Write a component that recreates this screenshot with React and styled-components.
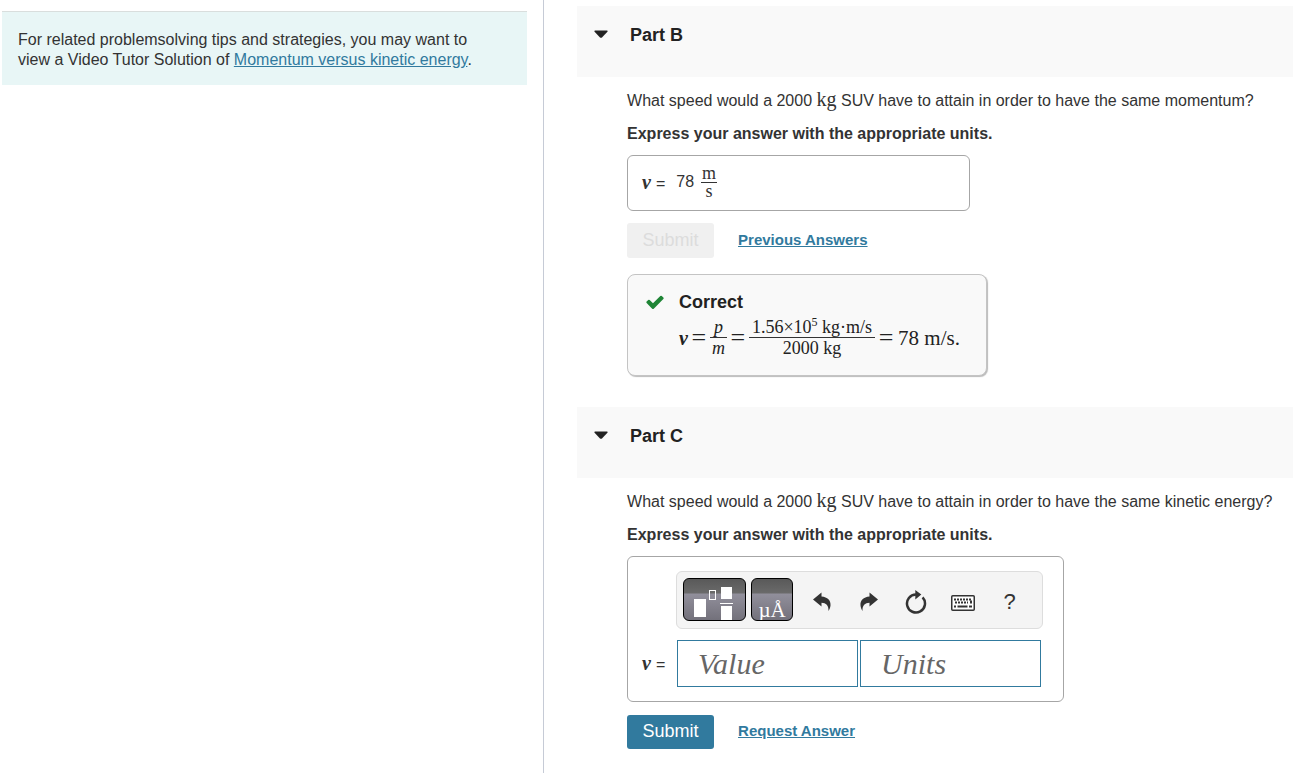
import React from "react";
import styled, { createGlobalStyle } from "styled-components";

const serif = `"Liberation Serif", "Times New Roman", serif`;

const GlobalStyle = createGlobalStyle`
  * { box-sizing: border-box; }
  body {
    margin: 0;
    background: #fff;
    color: #333;
    font: 16px/20px "Liberation Sans", Arial, sans-serif;
  }
  p, h2, h3 { margin: 0; }
  button, input { font-family: inherit; }
`;

const Page = styled.div`
  display: grid;
  grid-template-columns: 42fr 58fr;
  min-height: 100vh;
  overflow: hidden;
`;

const Sidebar = styled.aside`
  padding: 11px 16px 0 2px;
`;

const Tip = styled.p`
  padding: 18px 40px 15px 16px;
  border-top: 1px solid #d9dedd;
  background: #e8f6f6;
`;

const Link = styled.a`
  color: #317a9e;
  text-decoration: underline;
`;

const ActionLink = styled(Link)`
  padding-bottom: 2px;
  font-size: 15px;
  font-weight: bold;
`;

const Main = styled.main`
  border-left: 1px solid #c6cbd6;
  padding: 6px 0 0 33px;
  min-width: 0;
`;

const PartHeader = styled.header`
  display: flex;
  align-items: flex-start;
  gap: 22px;
  height: 71px;
  padding: 19px 0 0 17px;
  background: #f9f9f9;
`;

const Toggle = styled.button`
  display: flex;
  align-items: center;
  width: 14px;
  height: 18px;
  padding: 0;
  border: 0;
  background: none;
  cursor: pointer;
`;

const Title = styled.h2`
  color: #222;
  font-size: 18px;
  line-height: 20px;
`;

const PartBody = styled.div`
  display: flex;
  flex-direction: column;
  align-items: flex-start;
  padding: 14px 0 31px 50px;
`;

const Question = styled.p`
  white-space: nowrap;
`;

const Instruction = styled.p`
  margin: 13px 0 11px;
  font-weight: bold;
`;

const AnswerBox = styled.div`
  border: 1px solid #a6a6a6;
  border-radius: 6px;
  padding: 0 14px;
`;

const GivenAnswer = styled(AnswerBox)`
  display: flex;
  align-items: center;
  width: 343px;
  height: 56px;
  padding-bottom: 2px;
`;

const EntryBox = styled(AnswerBox)`
  display: grid;
  grid-template-columns: 34px auto;
  row-gap: 11px;
  align-items: center;
  width: 437px;
  padding: 14px 20px 14px 14px;
`;

const VarLabel = styled.label`
  display: flex;
  align-items: baseline;
  gap: 5px;
  padding-top: 2px;
  font-size: 16px;
`;

const Unit = styled.span`
  font-family: ${serif};
  font-size: 20px;
  line-height: 16px;
`;

const Var = styled.i`
  font-family: ${serif};
  font-size: 20px;
  line-height: 18px;
  font-weight: bold;
`;

const GivenValue = styled.span`
  margin: 0 7px 0 11px;
`;

const Fraction = styled.span`
  display: inline-flex;
  flex-direction: column;
  align-items: stretch;
  text-align: center;
  font-family: ${serif};
  font-size: 18px;
  line-height: ${(p) => p.$line || 20}px;
  white-space: nowrap;

  > :first-child {
    border-bottom: 1px solid #333;
    padding: 0 ${(p) => p.$pad || 0}px;
  }
`;

const Power = styled.sup`
  font-size: 12px;
  line-height: 0;
`;

const Actions = styled.div`
  display: flex;
  align-items: center;
  gap: 24px;
  margin-top: ${(p) => p.$top}px;
`;

const Submit = styled.button`
  width: 87px;
  height: 34px;
  padding: 0 0 2px;
  border: 0;
  border-radius: 3px;
  background: #317a9e;
  color: #fff;
  font-size: 18px;

  &:disabled {
    height: 35px;
    padding: 0 0 1px;
    background: #f0f0f0;
    color: #dcdcdc;
  }
`;

const Feedback = styled.section`
  display: grid;
  grid-template-columns: 34px auto;
  justify-content: start;
  align-content: start;
  width: 360px;
  height: 102px;
  margin-top: 16px;
  padding: 17px 17px 0;
  border: 1px solid #c4c4c4;
  border-radius: 8px;
  background: #f9f9f9;
  box-shadow: 1px 1px 1px #bbb;
`;

const Verdict = styled.h3`
  color: #222;
  font-size: 18px;
  line-height: 20px;
`;

const Equation = styled.div`
  grid-column: 2;
  display: flex;
  align-items: center;
  color: #222;
  font-family: ${serif};
  font-size: 21px;
  margin-top: 5px;
`;

const Equals = styled.span`
  width: 22px;
  text-align: center;
  font-size: 26px;
  line-height: 20px;
`;

const Result = styled.span`
  margin-left: 1px;
`;

const Toolbar = styled.div`
  grid-column: 2;
  display: flex;
  align-items: flex-start;
  width: 367px;
  height: 58px;
  padding: 6px;
  border: 1px solid #ddd;
  border-radius: 6px;
  background: #f4f4f4;
`;

const PaletteButton = styled.button`
  display: flex;
  justify-content: center;
  width: ${(p) => p.$width}px;
  height: 43px;
  margin-right: 5px;
  padding: 0;
  overflow: hidden;
  border: 1px solid #000;
  border-radius: 6px;
  background: linear-gradient(#595959 0, #6a6a6a 14px, #918f9b 15px, #73717b 100%);
  color: #fff;
  font-family: ${serif};
  font-size: 21px;
  line-height: 62px;
`;

const ToolButton = styled.button`
  display: flex;
  align-items: center;
  justify-content: center;
  width: 47px;
  height: 48px;
  padding: 0;
  border: 0;
  background: none;
  color: #333;
  font-size: 22px;
`;

const Inputs = styled.div`
  display: flex;
  gap: 2px;
  padding-left: 1px;
`;

const Entry = styled.input`
  width: 181px;
  height: 47px;
  padding: 0 20px;
  border: 1px solid #317a9e;
  border-radius: 0;
  background: #fff;
  color: #333;
  font: 30px ${serif};

  &::placeholder {
    color: #666;
    font-style: italic;
    opacity: 1;
  }
`;

function Part({ name, children }) {
  return (
    <section>
      <PartHeader>
        <Toggle aria-label={`Collapse ${name}`}>
          <svg width="14" height="8" viewBox="0 0 14 8">
            <path d="M1 .5h12q1 .5.4 1.200L8 7.400q-1 .9-2 0L.6 1.700Q0 1 1 .5z" fill="#222" />
          </svg>
        </Toggle>
        <Title>{name}</Title>
      </PartHeader>
      <PartBody>{children}</PartBody>
    </section>
  );
}

const CheckIcon = () => (
  <svg width="20" height="20" viewBox="0 0 1792 1792" fill="#1f8536">
    <path d="M1671 566q0 40-28 68l-724 724-136 136q-28 28-68 28t-68-28l-136-136-362-362q-28-28-28-68t28-68l136-136q28-28 68-28t68 28l294 295 656-657q28-28 68-28t68 28l136 136q28 28 28 68z" />
  </svg>
);

const TemplateIcon = () => (
  <svg width="61" height="41" viewBox="1 1 61 41">
    <path fill="#fff" d="M11 21h12v18H11zM38 9h11v12H38zM37 25h13v1H37zM38 28h11v14H38z" />
    <rect x="26.500" y="12.500" width="6" height="9" fill="none" stroke="#fff" />
  </svg>
);

const ArrowIcon = ({ flip }) => (
  <svg width="18" height="20" viewBox="0 0 18 20" fill="#333">
    <path
      transform={flip ? "matrix(-1 0 0 1 18 0)" : undefined}
      d="M0 7.500L8.500.5v4C14.500 5 18 8.500 17.500 13.500c-.2 2.300-1 4-2 5.500C15.800 13.500 13 10.800 8.500 10.800v3.700z"
    />
  </svg>
);

const ResetIcon = () => (
  <svg width="22" height="24" viewBox="0 0 22 24">
    <path d="M11 4.500a9 9 0 1 0 6.600 2.900" fill="none" stroke="#333" strokeWidth="2.500" />
    <path d="M10.300 0l6 4.500-6 5z" fill="#333" />
  </svg>
);

const KeyboardIcon = () => (
  <svg width="24" height="18" viewBox="0 -2 24 18">
    <rect x=".75" y=".75" width="22.500" height="14.500" rx="1" fill="#fff" stroke="#333" strokeWidth="1.500" />
    <path d="M3 4.500h18M4 7.500h13" stroke="#333" strokeWidth="2" strokeDasharray="2 1" />
    <path d="M19 7.500h2M3 11.500h2M6.500 11.500h10M18 11.500h3M20 5.500v3" stroke="#333" strokeWidth="2" />
  </svg>
);

export default function App() {
  return (
    <>
      <GlobalStyle />
      <Page>
        <Sidebar>
          <Tip>
            For related problemsolving tips and strategies, you may want to view a Video Tutor
            Solution of <Link href="#video">Momentum versus kinetic energy</Link>.
          </Tip>
        </Sidebar>
        <Main>
          <Part name="Part B">
            <Question>
              What speed would a 2000 <Unit>kg</Unit> SUV have to attain in order to have the same
              momentum?
            </Question>
            <Instruction>Express your answer with the appropriate units.</Instruction>
            <GivenAnswer>
              <VarLabel as="span"><Var>v</Var>=</VarLabel>
              <GivenValue>78</GivenValue>
              <Fraction $line={17} $pad={1}>
                <span>m</span>
                <span>s</span>
              </Fraction>
            </GivenAnswer>
            <Actions $top={12}>
              <Submit disabled>Submit</Submit>
              <ActionLink href="#previous">Previous Answers</ActionLink>
            </Actions>
            <Feedback>
              <CheckIcon />
              <Verdict>Correct</Verdict>
              <Equation>
                <Var>v</Var>
                <Equals>=</Equals>
                <Fraction $pad={4}>
                  <i>p</i>
                  <i>m</i>
                </Fraction>
                <Equals>=</Equals>
                <Fraction $pad={3}>
                  <span>1.56×10<Power>5</Power> kg·m/s</span>
                  <span>2000 kg</span>
                </Fraction>
                <Equals>=</Equals>
                <Result>78 m/s.</Result>
              </Equation>
            </Feedback>
          </Part>
          <Part name="Part C">
            <Question>
              What speed would a 2000 <Unit>kg</Unit> SUV have to attain in order to have the same
              kinetic energy?
            </Question>
            <Instruction>Express your answer with the appropriate units.</Instruction>
            <EntryBox>
              <Toolbar role="toolbar" aria-label="Math tools">
                <PaletteButton $width={63} aria-label="Templates"><TemplateIcon /></PaletteButton>
                <PaletteButton $width={42} aria-label="Symbols">µÅ</PaletteButton>
                <ToolButton aria-label="Undo"><ArrowIcon /></ToolButton>
                <ToolButton aria-label="Redo"><ArrowIcon flip /></ToolButton>
                <ToolButton aria-label="Reset"><ResetIcon /></ToolButton>
                <ToolButton aria-label="Keyboard"><KeyboardIcon /></ToolButton>
                <ToolButton aria-label="Help">?</ToolButton>
              </Toolbar>
              <VarLabel htmlFor="value"><Var>v</Var>=</VarLabel>
              <Inputs>
                <Entry id="value" placeholder="Value" />
                <Entry aria-label="Units" placeholder="Units" />
              </Inputs>
            </EntryBox>
            <Actions $top={13}>
              <Submit>Submit</Submit>
              <ActionLink href="#request">Request Answer</ActionLink>
            </Actions>
          </Part>
        </Main>
      </Page>
    </>
  );
}
